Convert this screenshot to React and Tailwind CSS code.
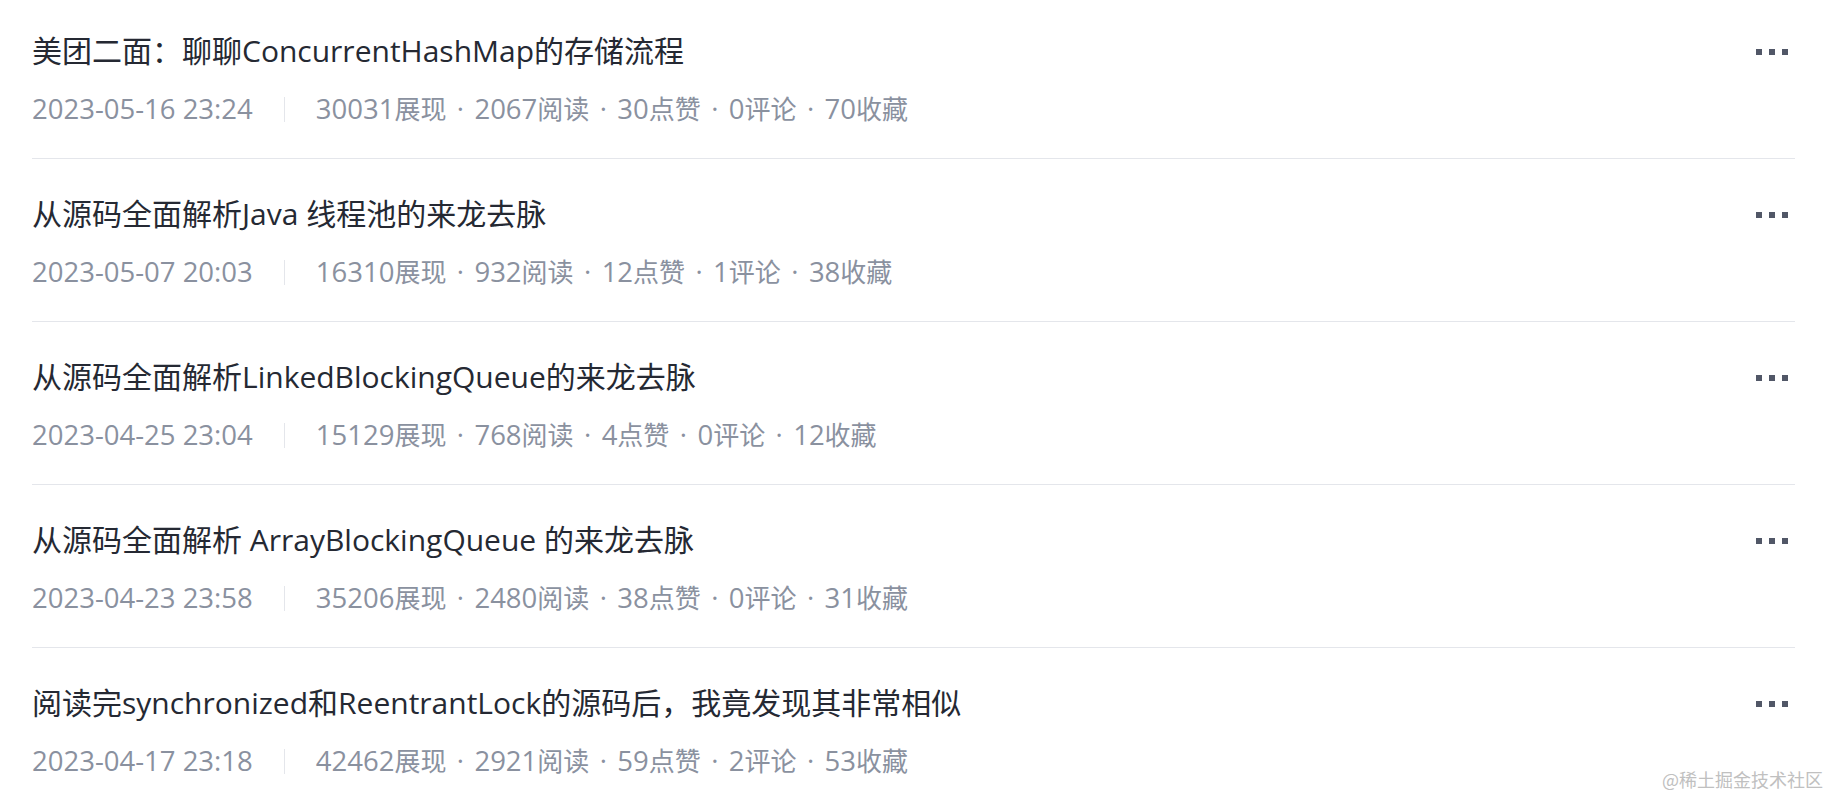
import React from 'react';

const articles = [
  {
    title: '美团二面：聊聊ConcurrentHashMap的存储流程',
    time: '2023-05-16 23:24',
    stats: [['30031', '展现'], ['2067', '阅读'], ['30', '点赞'], ['0', '评论'], ['70', '收藏']],
  },
  {
    title: '从源码全面解析Java 线程池的来龙去脉',
    time: '2023-05-07 20:03',
    stats: [['16310', '展现'], ['932', '阅读'], ['12', '点赞'], ['1', '评论'], ['38', '收藏']],
  },
  {
    title: '从源码全面解析LinkedBlockingQueue的来龙去脉',
    time: '2023-04-25 23:04',
    stats: [['15129', '展现'], ['768', '阅读'], ['4', '点赞'], ['0', '评论'], ['12', '收藏']],
  },
  {
    title: '从源码全面解析 ArrayBlockingQueue 的来龙去脉',
    time: '2023-04-23 23:58',
    stats: [['35206', '展现'], ['2480', '阅读'], ['38', '点赞'], ['0', '评论'], ['31', '收藏']],
  },
  {
    title: '阅读完synchronized和ReentrantLock的源码后，我竟发现其非常相似',
    time: '2023-04-17 23:18',
    stats: [['42462', '展现'], ['2921', '阅读'], ['59', '点赞'], ['2', '评论'], ['53', '收藏']],
  },
];

const font = { fontFamily: '"Open Sans", "Noto Sans CJK SC", sans-serif' };

const MoreButton = () => (
  <div className="flex items-center gap-[7px] pr-[7px] pt-[1px]">
    <span className="block w-[6px] h-[6px] bg-[#515767]" />
    <span className="block w-[6px] h-[6px] bg-[#515767]" />
    <span className="block w-[6px] h-[6px] bg-[#515767]" />
  </div>
);

const ArticleRow = ({ article, first, last }) => (
  <div
    className={`flex items-start justify-between ${first ? 'pt-[30px]' : 'pt-[34px]'} pb-[31px] ${
      last ? '' : 'border-b border-[#e4e6eb]'
    }`}
  >
    <div className="flex flex-col">
      <h3 className="text-[30px] leading-[42px] font-normal text-[#252933] whitespace-nowrap">
        {article.title}
      </h3>
      <div className="flex items-center mt-[19px] text-[27.5px] leading-[36px] text-[#8a919f] whitespace-nowrap">
        <span>{article.time}</span>
        <span className="block w-px h-[25px] bg-[#e4e6eb] mx-[31px]" />
        {article.stats.map(([n, u], i) => (
          <React.Fragment key={u}>
            {i > 0 && <span className="mx-[10.4px]">·</span>}
            <span>
              {n}
              <span className="text-[26px]">{u}</span>
            </span>
          </React.Fragment>
        ))}
      </div>
    </div>
    <div className="h-[42px] flex items-center">
      <MoreButton />
    </div>
  </div>
);

export default function App() {
  return (
    <div className="relative w-[1830px] h-[797px] overflow-hidden bg-white" style={font}>
      <div className="pl-[32px] pr-[35px]">
        {articles.map((a, i) => (
          <ArticleRow key={a.time} article={a} first={i === 0} last={i === articles.length - 1} />
        ))}
      </div>
      <div
        className="absolute right-[7px] bottom-[4px] text-[18px] text-[#c0c0c0]"
        style={{ fontFamily: '"Noto Sans CJK SC", sans-serif' }}
      >
        @稀土掘金技术社区
      </div>
    </div>
  );
}
